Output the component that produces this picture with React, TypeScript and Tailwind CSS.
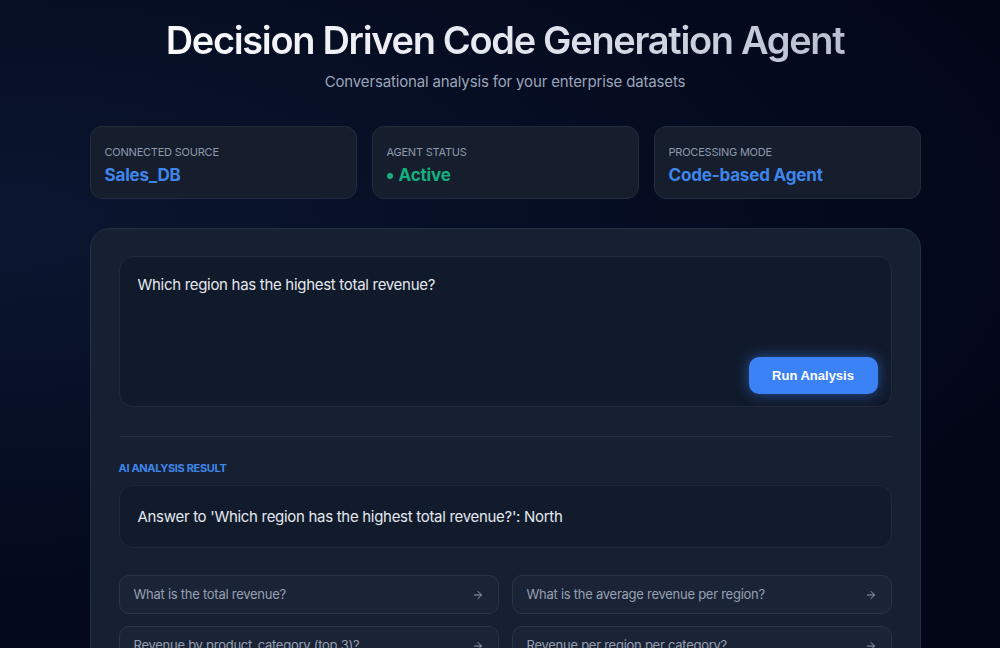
import React from "react";

const suggestions = [
  "What is the total revenue?",
  "What is the average revenue per region?",
  "Revenue by product_category (top 3)?",
  "Revenue per region per category?",
];

function Arrow() {
  return (
    <svg width="12" height="12" viewBox="0 0 24 24" fill="none" stroke="currentColor" strokeWidth="2" strokeLinecap="round" strokeLinejoin="round">
      <path d="M5 12h14" />
      <path d="M12 5l7 7-7 7" />
    </svg>
  );
}

export default function App() {
  return (
    <div
      className="w-full min-h-[648px] h-[648px] overflow-hidden bg-[radial-gradient(ellipse_at_0%_35%,#0b1630_0%,#060d22_45%,#020617_80%)] text-slate-200 pl-[10px]"
      style={{ fontFamily: "Inter, 'Noto Sans', sans-serif" }}
    >
      <div className="w-[831px] mx-auto flex flex-col">
        <h1 className="mt-[18px] text-center text-[38px] leading-[44px] font-semibold tracking-[-0.035em] bg-gradient-to-r from-white via-[#e5e7f0] to-[#aeb6c8] bg-clip-text text-transparent">
          Decision Driven Code Generation Agent
        </h1>
        <p className="mt-[10px] text-center text-[15px] leading-[20px] text-[#9aa5b8] tracking-[-0.01em]">
          Conversational analysis for your enterprise datasets
        </p>

        <div className="mt-[34px] grid grid-cols-3 gap-[15px]">
          {[
            { label: "CONNECTED SOURCE", value: "Sales_DB", cls: "text-[#3f86ec]", dot: false },
            { label: "AGENT STATUS", value: "Active", cls: "text-[#14b07f]", dot: true },
            { label: "PROCESSING MODE", value: "Code-based Agent", cls: "text-[#3f86ec]", dot: false },
          ].map((c) => (
            <div key={c.label} className="h-[73px] rounded-[12px] bg-[#161e2e] border border-[#232c3c] px-[14px] pt-[19px]">
              <div className="text-[11px] leading-[13px] text-[#8e98aa] tracking-[-0.02em]">{c.label}</div>
              <div className={`mt-[5px] flex items-center text-[17px] leading-[22px] font-bold tracking-[-0.01em] ${c.cls}`}>
                {c.dot && <span className="w-[6px] h-[6px] rounded-full bg-[#14b07f] mr-[6px] mt-[1px]" />}
                {c.value}
              </div>
            </div>
          ))}
        </div>

        <div className="mt-[29px] rounded-[20px] bg-[#172031] border border-[#243043] px-[28px] pt-[27px] pb-[30px] h-[460px]">
          <div className="h-[151px] rounded-[14px] bg-[#111a2b] border border-[#202a3b] flex flex-col pl-[18px] pr-[13px] pt-[18px] pb-[12px]">
            <div className="text-[15px] leading-[20px] text-[#e4e8ef] tracking-[-0.02em]">
              Which region has the highest total revenue?
            </div>
            <div className="mt-auto flex justify-end">
              <button
                className="w-[129px] h-[37px] rounded-[10px] bg-[#3b82f6] text-white text-[13px] font-bold shadow-[0_0_14px_rgba(59,130,246,0.55)]"
                style={{ fontFamily: "'Liberation Sans', Arial, sans-serif" }}
              >
                Run Analysis
              </button>
            </div>
          </div>

          <div className="mt-[29px] h-px bg-[#242e40]" />

          <div className="mt-[25px] text-[11px] leading-[13px] font-bold text-[#3f86ec] tracking-[-0.03em]">
            AI ANALYSIS RESULT
          </div>

          <div className="mt-[10px] h-[63px] rounded-[14px] bg-[#121b2c] border border-[#1f293a] flex items-center px-[18px]">
            <div className="text-[15px] leading-[20px] text-[#e4e8ef] tracking-[-0.02em]">
              Answer to 'Which region has the highest total revenue?': North
            </div>
          </div>

          <div className="mt-[27px] grid grid-cols-2 gap-x-[13px] gap-y-[12px]">
            {suggestions.map((s) => (
              <div key={s} className="h-[39px] rounded-[10px] bg-[#1b2436] border border-[#2a3446] flex items-center justify-between pl-[14px] pr-[14px] text-[#96a0b2]">
                <span className="text-[13px] tracking-[-0.02em]">{s}</span>
                <Arrow />
              </div>
            ))}
          </div>
        </div>
      </div>
    </div>
  );
}
